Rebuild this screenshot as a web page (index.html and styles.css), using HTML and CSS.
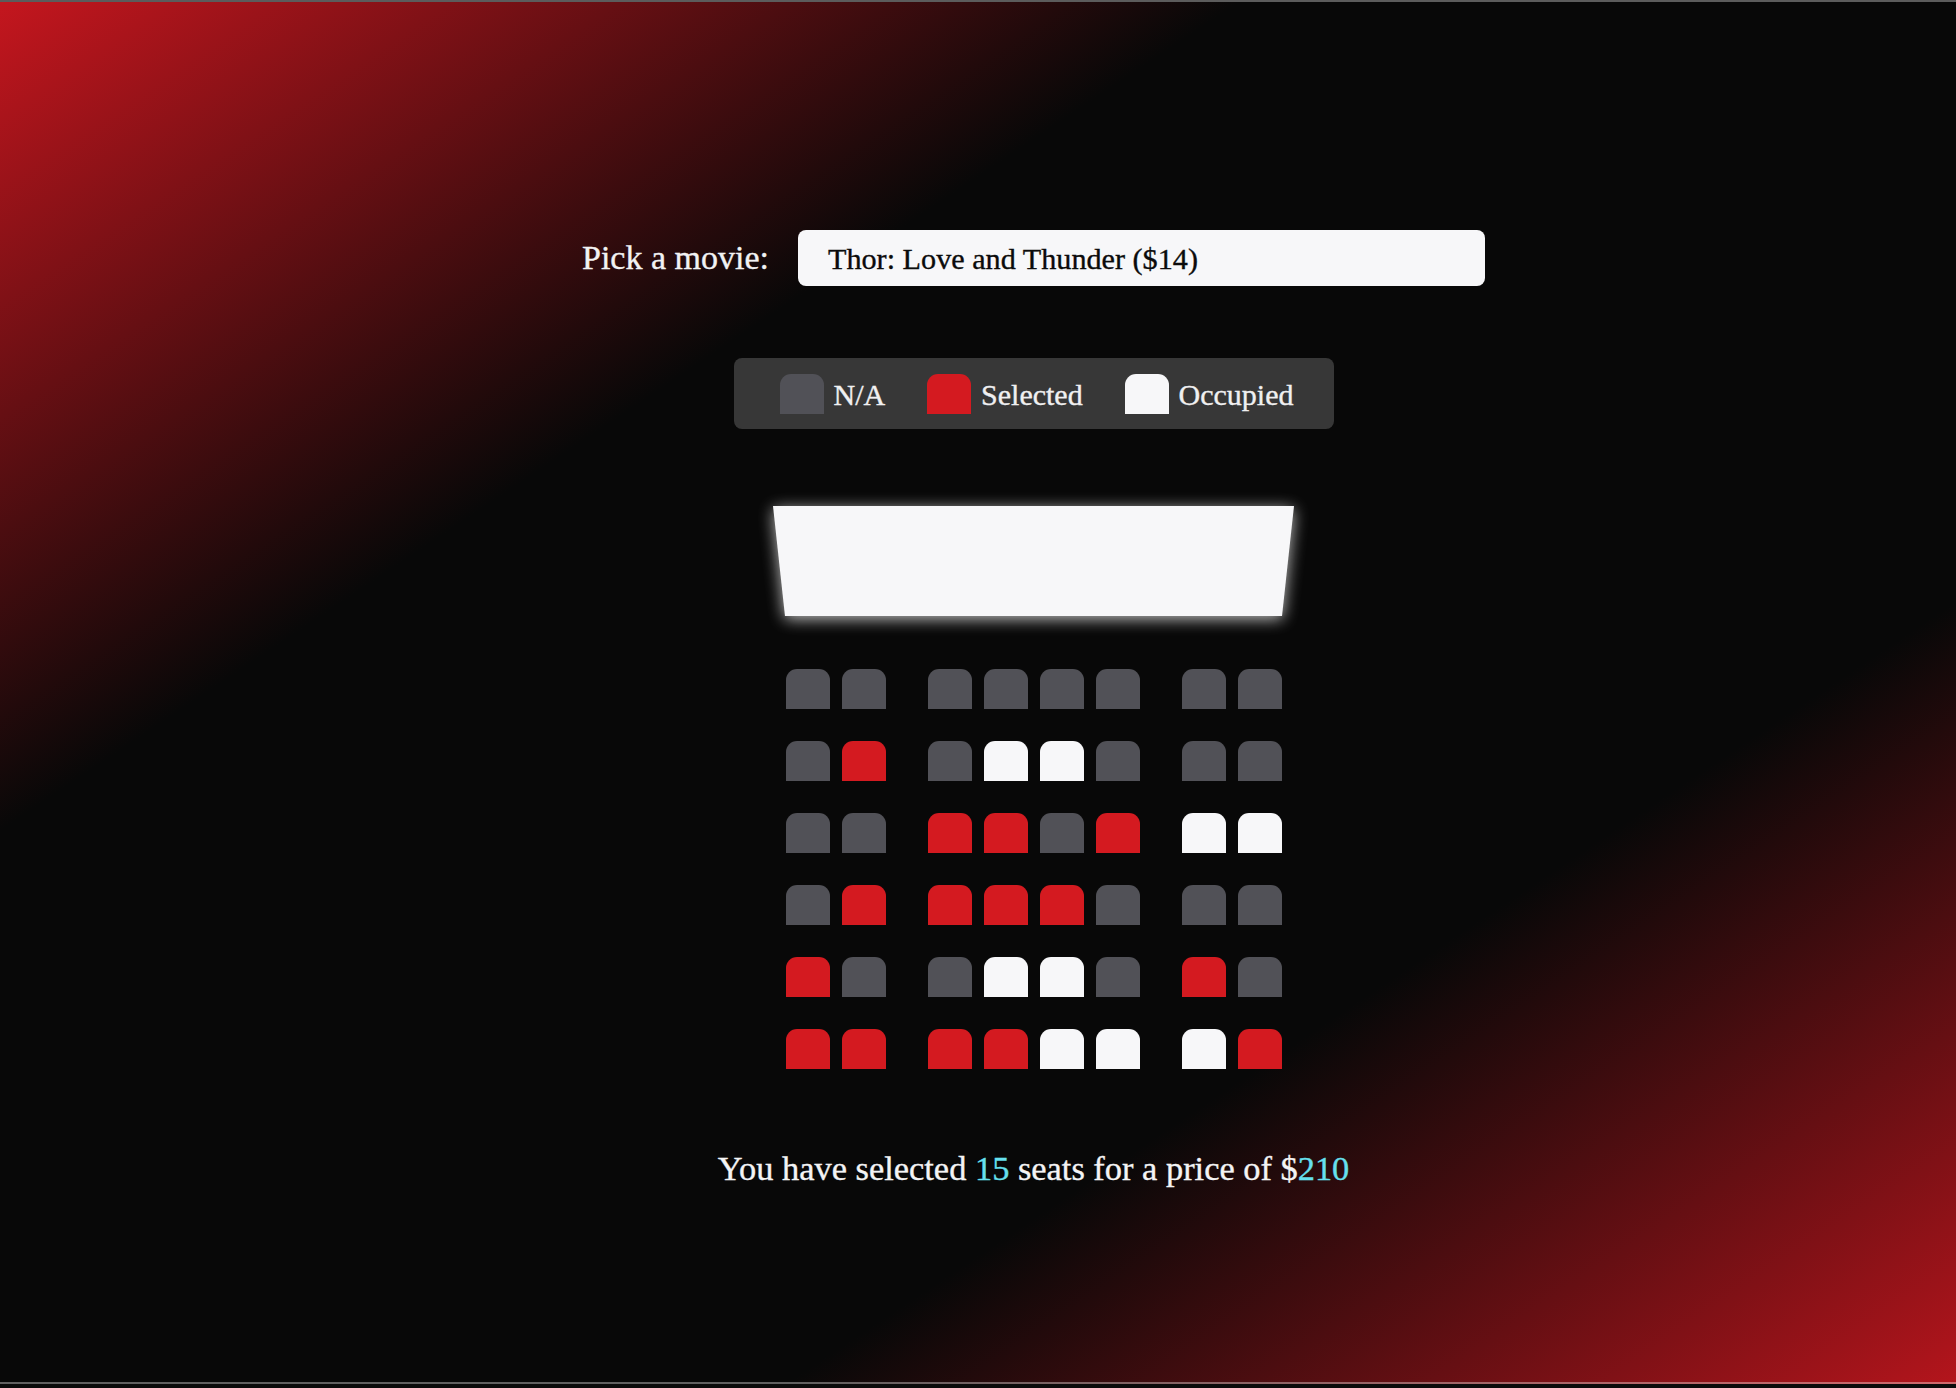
FILE: index.html
```html
<!DOCTYPE html>
<html lang="en">
<head>
<meta charset="UTF-8">
<title>Movie Seat Booking</title>
<link rel="stylesheet" href="styles.css">
</head>
<body>
<div class="page">
  <main class="app">
    <div class="movie-row">
      <label class="movie-label">Pick a movie:</label>
      <div class="movie-select">Thor: Love and Thunder ($14)</div>
    </div>

    <ul class="showcase">
      <li class="legend-item"><span class="seat"></span><small>N/A</small></li>
      <li class="legend-item"><span class="seat selected"></span><small>Selected</small></li>
      <li class="legend-item"><span class="seat occupied"></span><small>Occupied</small></li>
    </ul>

    <div class="screen-wrap"><div class="screen"></div></div>

    <div class="seats">
      <div class="row">
        <span class="seat"></span><span class="seat"></span>
        <span class="seat aisle"></span><span class="seat"></span><span class="seat"></span><span class="seat"></span>
        <span class="seat aisle"></span><span class="seat"></span>
      </div>
      <div class="row">
        <span class="seat"></span><span class="seat selected"></span>
        <span class="seat aisle"></span><span class="seat occupied"></span><span class="seat occupied"></span><span class="seat"></span>
        <span class="seat aisle"></span><span class="seat"></span>
      </div>
      <div class="row">
        <span class="seat"></span><span class="seat"></span>
        <span class="seat aisle selected"></span><span class="seat selected"></span><span class="seat"></span><span class="seat selected"></span>
        <span class="seat aisle occupied"></span><span class="seat occupied"></span>
      </div>
      <div class="row">
        <span class="seat"></span><span class="seat selected"></span>
        <span class="seat aisle selected"></span><span class="seat selected"></span><span class="seat selected"></span><span class="seat"></span>
        <span class="seat aisle"></span><span class="seat"></span>
      </div>
      <div class="row">
        <span class="seat selected"></span><span class="seat"></span>
        <span class="seat aisle"></span><span class="seat occupied"></span><span class="seat occupied"></span><span class="seat"></span>
        <span class="seat aisle selected"></span><span class="seat"></span>
      </div>
      <div class="row">
        <span class="seat selected"></span><span class="seat selected"></span>
        <span class="seat aisle selected"></span><span class="seat selected"></span><span class="seat occupied"></span><span class="seat occupied"></span>
        <span class="seat aisle occupied"></span><span class="seat selected"></span>
      </div>
    </div>

    <p class="summary">You have selected <span class="hl">15</span> seats for a price of $<span class="hl">210</span></p>
  </main>
</div>
<div class="bottom-strip"></div>
</body>
</html>
```

FILE: styles.css
```css
html, body {
  margin: 0;
  padding: 0;
  background: #0a0a0a;
  overflow: hidden;
  width: 1956px;
  height: 1388px;
}

body {
  border-top: 2px solid #5c5c5c;
  box-sizing: border-box;
  font-family: "Liberation Serif", "Times New Roman", serif;
  color: #f3f3f4;
  -webkit-text-stroke: 0.35px currentColor;
}

.page {
  width: 100%;
  height: 1382px;
  box-sizing: border-box;
  padding-left: 111px;
  background-image: linear-gradient(to bottom right, #c4161e 0%, #080808 30%, #080808 69%, #c4161e 100%);
  background-size: 2067px 100%;
  background-repeat: no-repeat;
  background-color: #080808;
  box-shadow: inset 0 -2px 0 rgba(255, 255, 255, 0.36);
  display: flex;
  justify-content: center;
}

.app {
  display: flex;
  flex-direction: column;
  align-items: center;
  padding-top: 228px;
}

.movie-row {
  display: flex;
  align-items: center;
  gap: 29px;
}

.movie-label {
  font-size: 34px;
  color: #f2f2f3;
}

.movie-select {
  width: 687px;
  height: 56px;
  box-sizing: border-box;
  padding: 3px 30px 0;
  display: flex;
  align-items: center;
  background: #f7f7f9;
  border-radius: 8px;
  color: #0b0b0b;
  font-size: 30.2px;
}

.showcase {
  list-style: none;
  margin: 72px 0 0;
  width: 600px;
  height: 71px;
  box-sizing: border-box;
  padding: 0 40px 0 46px;
  background: #373737;
  border-radius: 8px;
  display: flex;
  align-items: center;
  justify-content: space-between;
}

.legend-item {
  display: flex;
  align-items: center;
  gap: 10px;
}

.legend-item small {
  font-size: 30px;
  color: #f0f0f1;
  padding-top: 3px;
}

.seat {
  display: block;
  width: 44px;
  height: 40px;
  background: #515157;
  border-radius: 11px 11px 0 0;
}

.seat.selected {
  background: #d41a20;
}

.seat.occupied {
  background: #f7f7f9;
}

.screen-wrap {
  margin-top: 77px;
  filter: drop-shadow(0 3px 8px rgba(255, 255, 255, 0.75));
}

.screen {
  width: 521px;
  height: 110px;
  background: #f7f7f9;
  clip-path: polygon(0 0, 100% 0, 97.7% 100%, 2.3% 100%);
}

.seats {
  margin-top: 53px;
  display: flex;
  flex-direction: column;
  gap: 32px;
}

.row {
  display: flex;
  gap: 12px;
}

.row .aisle {
  margin-left: 30px;
}

.summary {
  margin: 79px 0 0;
  font-size: 34.4px;
  line-height: 40px;
  color: #f4f4f5;
}

.summary .hl {
  color: #66e0ee;
}

.bottom-strip {
  height: 4px;
  background: #0b0b0b;
}
```
